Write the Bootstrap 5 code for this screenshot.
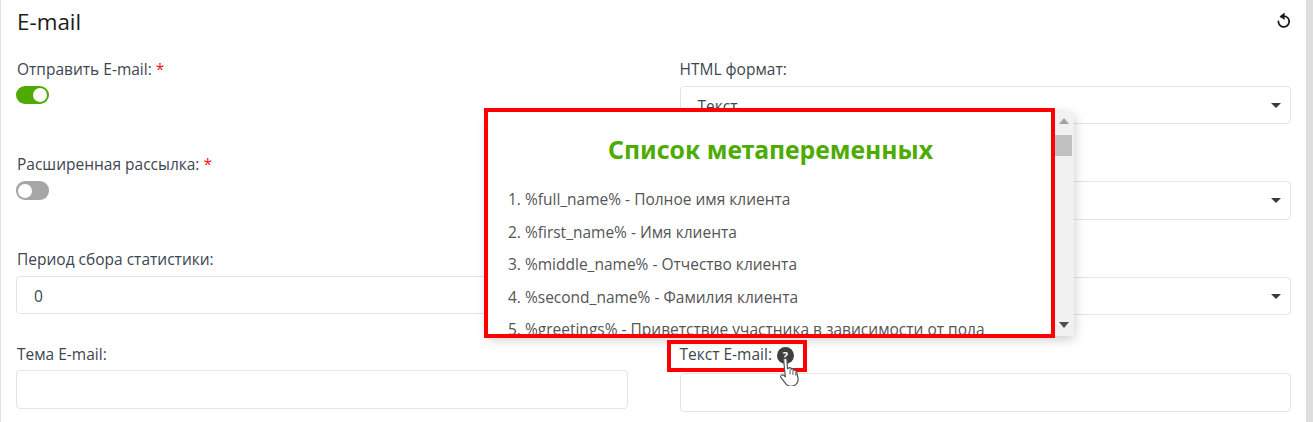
<!DOCTYPE html>
<html lang="ru">
<head>
<meta charset="utf-8">
<title>E-mail</title>
<link href="https://cdn.jsdelivr.net/npm/bootstrap@5.3.0/dist/css/bootstrap.min.css" rel="stylesheet">
<style>
html,body{height:422px;overflow:hidden;background:#fff}
body{font-family:"Open Sans","Noto Sans",sans-serif;font-size:15.5px;color:#3c4650;position:relative}
.shell{height:422px;margin-right:7px;padding:0 15px 0 15px;border-left:1px solid #e2e2e2;box-sizing:border-box}
.rstrip{position:absolute;top:0;right:0;bottom:0;width:7px;background:#dedede}
.head-line{height:44px;color:#1c1c1c}
.head-line h5{font-size:22.4px;font-weight:400;line-height:44px;margin:0 0 0 1px;font-family:inherit}
.frow{--bs-gutter-x:52px;--bs-gutter-y:0}
.fblock{height:95px;padding-top:14px}
.flabel{display:block;line-height:22px;margin:0 0 0 1px;white-space:nowrap;color:#3c4650}
.flabel-r{margin-left:0}
.req{color:#f0141e}
.sw{width:33px;height:18px;border-radius:9px;margin-top:6px;position:relative}
.sw::after{content:"";position:absolute;top:2px;width:14px;height:14px;border-radius:50%;background:#fff}
.sw-on{background:#4dab02}.sw-on::after{right:2px}
.sw-off{background:#a6a6a6;height:19px}.sw-off::after{left:2px;top:2.5px}
.fbox{height:38.5px;border:1px solid #e4e4e4;border-radius:4px;background:#fff;padding:0 17px;line-height:38.5px;position:relative;color:#3c4650}
.gap-a{margin-top:5.5px}
.gap-b{margin-top:5px}
.gap-c{margin-top:6px}
.gap-d{margin-top:6.5px}
.gap-e{margin-top:8px}
.fsel::after{content:"";position:absolute;right:9px;top:16px;border:5.5px solid transparent;border-top:5.5px solid #3a3a3a;border-bottom:0}
.hint{display:inline-flex;width:17px;height:17px;border-radius:50%;background:#3f3f3f;color:#fff;font-size:11px;font-weight:700;align-items:center;justify-content:center;vertical-align:0;margin-left:1px;line-height:1}
.pop{position:absolute;left:488px;top:112px;width:586px;height:224px;background:#fff;box-shadow:0 3px 12px rgba(0,0,0,.22);border-radius:3px;overflow:hidden}
.pop-body{flex:1 1 auto;overflow:hidden;padding:20px 20px 0 20px;color:#555}
.pop-title{color:#4dab02;font-size:24.8px;font-weight:700;text-align:center;line-height:34px;margin:0 0 22px;font-family:"Noto Sans","Open Sans",sans-serif;padding-right:2px}
.pop-list{margin:0;padding:0;list-style:none;line-height:22px}
.pop-list li{margin-bottom:10.6px;white-space:nowrap}
.sbar{width:19px;flex:0 0 19px;background:#f1f1f1;padding:0 2px 0 0}
.sb-up,.sb-down{height:0;width:0;border:5px solid transparent;margin:0 auto}
.sb-up{border-bottom:6px solid #a3a3a3;border-top:0;margin-top:6px}
.sb-thumb{height:21px;background:#c1c1c1;margin-top:11px}
.sb-down{border-top:6px solid #505050;border-bottom:0}
.mark-a,.mark-b{position:absolute;border:4px solid #f00;pointer-events:none}
.mark-a{left:484px;top:108px;width:571px;height:230px}
.mark-b{left:667px;top:340px;width:140px;height:32px}
.cursor{position:absolute;left:780px;top:358px;width:23px;height:28px}
</style>
</head>
<body>
<div class="shell">
  <div class="head-line d-flex justify-content-between align-items-center">
    <h5>E-mail</h5>
    <svg width="14" height="17" viewBox="0 0 14 17" fill="none" aria-hidden="true" style="margin-top:-4px">
      <path d="M4.2 4.8 A5.4 5.4 0 1 1 1.4 9.4" stroke="#1a1a1a" stroke-width="1.8" stroke-linecap="round"/>
      <path d="M7.6 .6 L2.6 4.6 L7.6 8 Z" fill="#1a1a1a"/>
    </svg>
  </div>
  <div class="row frow">
    <div class="col-6">
      <div class="fblock"><label class="flabel">Отправить E-mail: <span class="req">*</span></label><div class="sw sw-on"></div></div>
      <div class="fblock"><label class="flabel">Расширенная рассылка: <span class="req">*</span></label><div class="sw sw-off"></div></div>
      <div class="fblock"><label class="flabel">Период сбора статистики:</label><div class="fbox gap-a">0</div></div>
      <div class="fblock"><label class="flabel">Тема E-mail:</label><div class="fbox gap-b"></div></div>
    </div>
    <div class="col-6">
      <div class="fblock"><label class="flabel flabel-r">HTML формат:</label><div class="fbox fsel gap-a">Текст</div></div>
      <div class="fblock"><label class="flabel flabel-r">&nbsp;</label><div class="fbox fsel gap-c"></div></div>
      <div class="fblock"><label class="flabel flabel-r">&nbsp;</label><div class="fbox fsel gap-d"></div></div>
      <div class="fblock"><label class="flabel flabel-r">Текст E-mail: <span class="hint">?</span></label><div class="fbox gap-e"></div></div>
    </div>
  </div>
</div>
<div class="rstrip"></div>
<div class="pop d-flex">
  <div class="pop-body">
    <h3 class="pop-title">Список метапеременных</h3>
    <ol class="pop-list">
      <li>1. %full_name% - Полное имя клиента</li>
      <li>2. %first_name% - Имя клиента</li>
      <li>3. %middle_name% - Отчество клиента</li>
      <li>4. %second_name% - Фамилия клиента</li>
      <li>5. %greetings% - Приветствие участника в зависимости от пола</li>
    </ol>
  </div>
  <div class="sbar d-flex flex-column">
    <div class="sb-up"></div>
    <div class="sb-thumb"></div>
    <div class="flex-grow-1"></div>
    <div class="sb-down mb-2"></div>
  </div>
</div>
<div class="mark-a"></div>
<div class="mark-b"></div>
<svg class="cursor" viewBox="2 1 18 23" aria-hidden="true">
  <path d="M5 1.5c1-.8 2.2 0 2.3 1.2l.4 7 1.4-.6c.8-.3 1.5.1 1.7.7l.2.5c.6-.5 1.5-.4 1.9.3l.2.6c.7-.4 1.6-.2 1.9.6l1.2 5c.6 2.8-.6 5.4-2.6 6.6-2.2 1.2-5 1-6.9-.7L2.6 17.3c-.8-.8-.6-1.9.2-2.3.7-.4 1.5-.2 2.1.4l1 1L4.6 3c0-.6 0-1.1.4-1.5z" fill="#fff" stroke="#555" stroke-width="1" stroke-linejoin="round"/>
  <path d="M9.8 10.5v4M12.2 11v4M14.6 12v3.5" stroke="#555" stroke-width=".8" fill="none"/>
</svg>
</body>
</html>
